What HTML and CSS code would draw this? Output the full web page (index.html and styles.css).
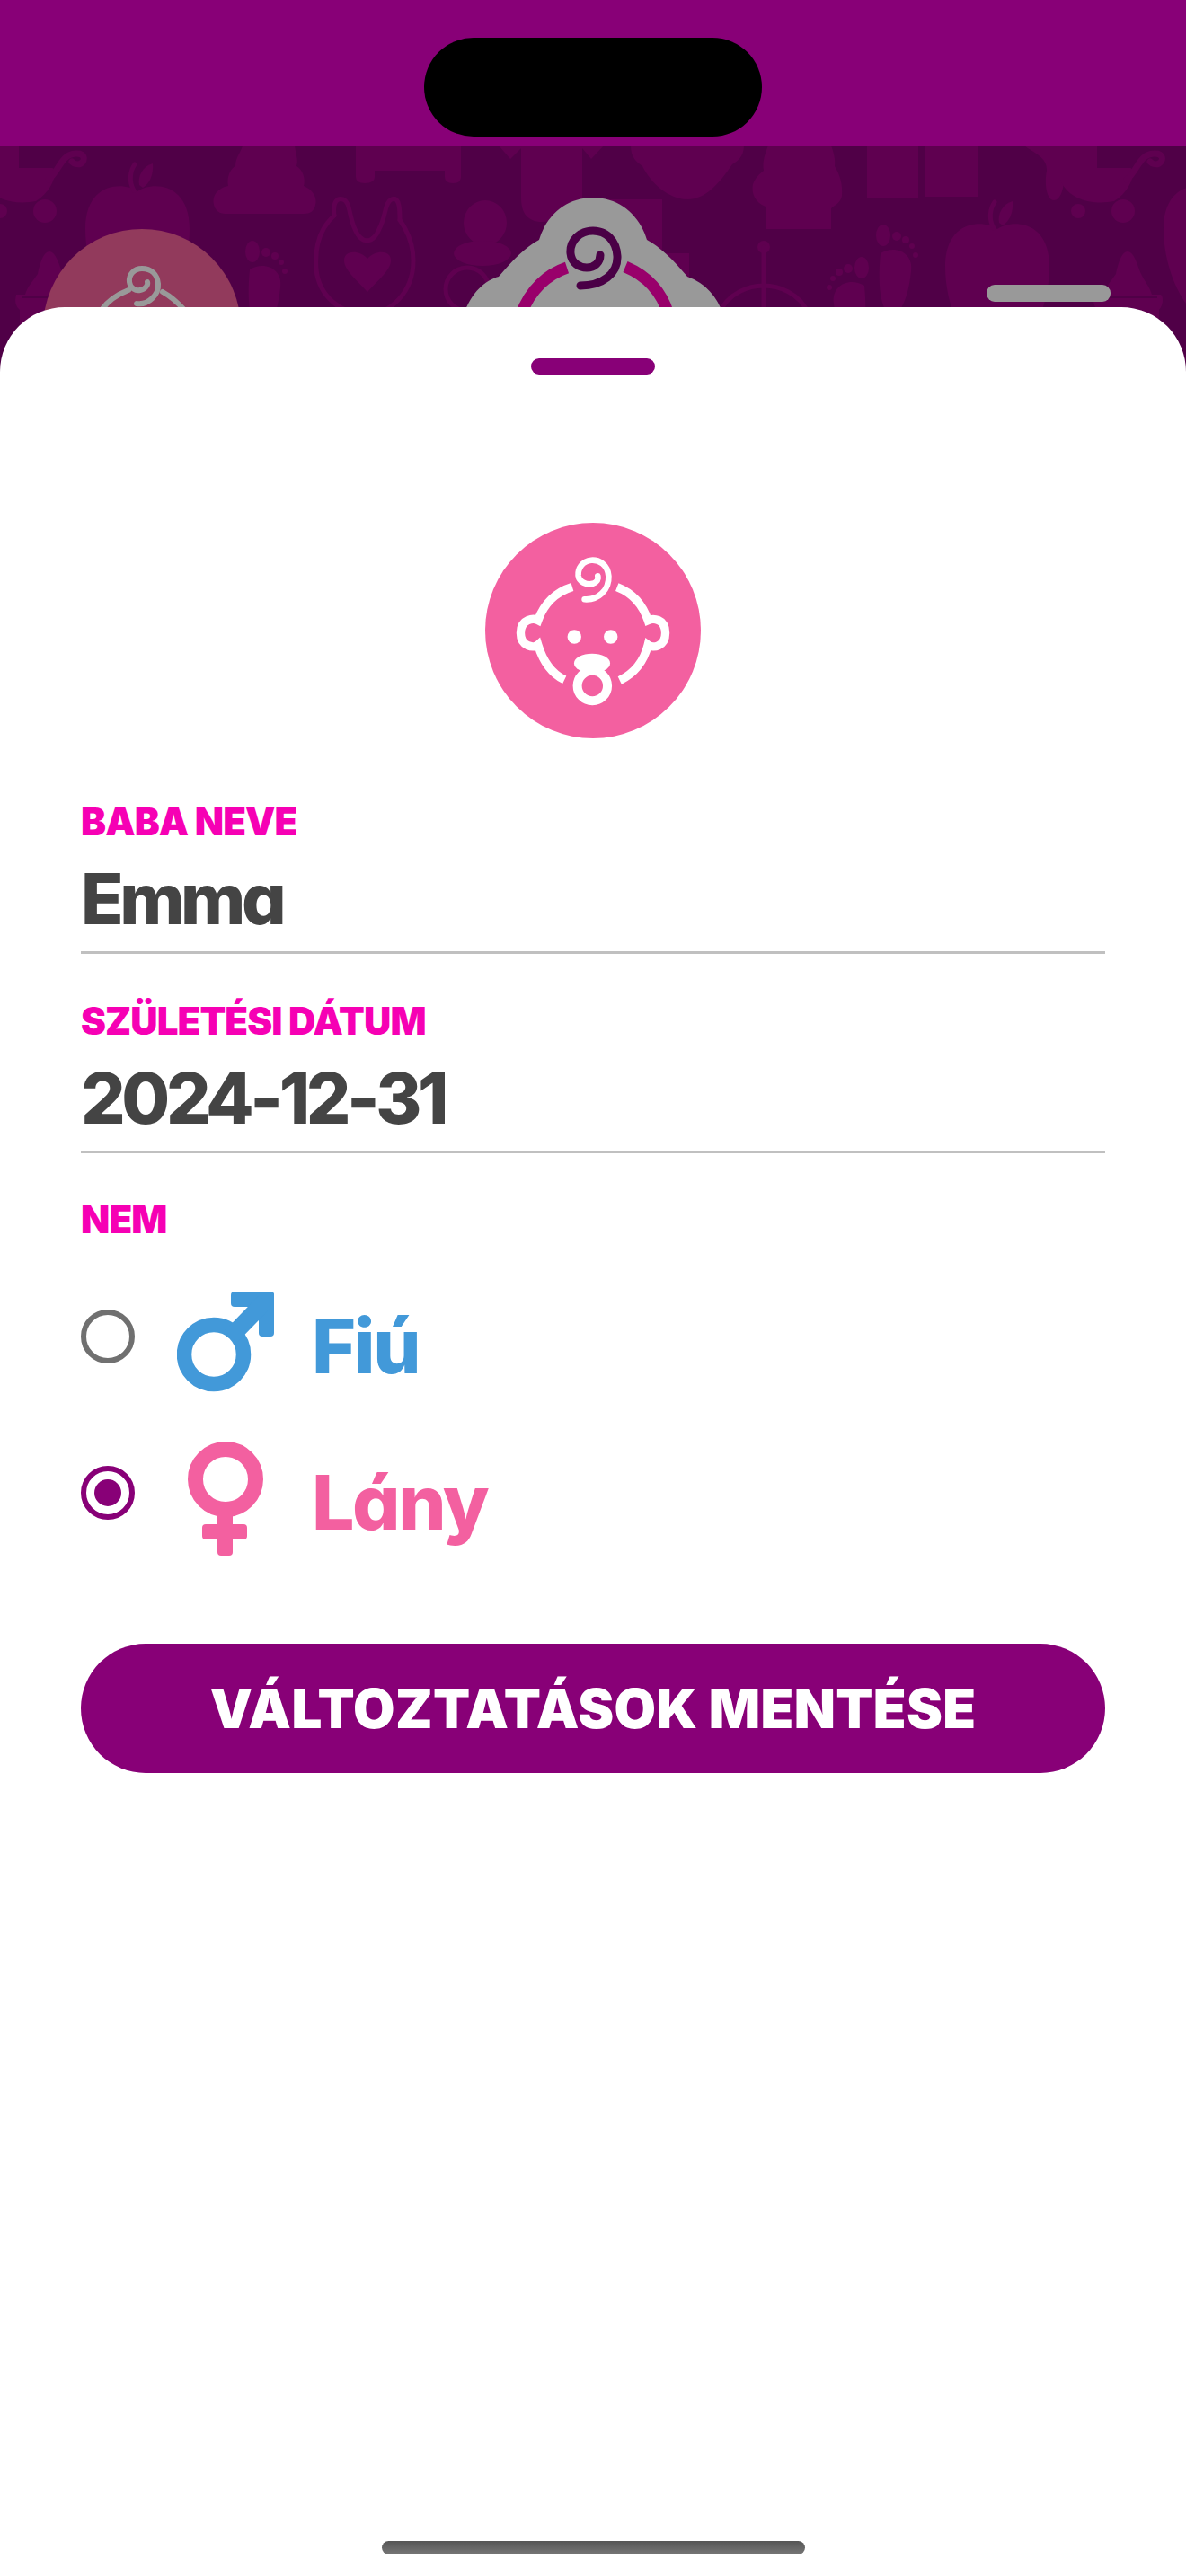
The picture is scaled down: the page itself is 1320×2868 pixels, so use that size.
FILE: index.html
```html
<!DOCTYPE html>
<html lang="hu">
<head>
<meta charset="utf-8">
<title>Baba adatai</title>
<link rel="stylesheet" href="styles.css">
</head>
<body>
<div class="screen">
  <header class="status"><div class="island"></div></header>
  <div class="hero">
    <svg class="hero-art" viewBox="0 162 1320 252" width="1320" height="252" aria-hidden="true">
      <defs>
        <g id="apple">
          <path class="sh" d="M0 3C-15-8-58-8-58 45C-58 95-30 150 0 150C30 150 58 95 58 45C58-8 15-8 0 3Z"/>
          <path class="ln4" d="M-4 2C-10-8-8-20-3-27"/>
          <path class="sh" d="M2-4C0-14 6-25 17-28C18-16 14-6 6-1Z"/>
        </g>
        <g id="foot">
          <ellipse class="sh" cx="0" cy="0" rx="8" ry="12"/>
          <circle class="sh" cx="15" cy="1" r="5"/>
          <circle class="sh" cx="25" cy="5" r="4"/>
          <circle class="sh" cx="32" cy="12" r="3"/>
          <circle class="sh" cx="36" cy="22" r="3"/>
          <path class="sh" d="M-3 20C14 10 34 20 31 40C29 60 24 80 13 90C-2 90-7 60-3 20Z"/>
        </g>
        <g id="tile">
          <path class="sh" d="M-20 162H21V187H58C65 188 60 212 40 224C20 228-10 225-20 200Z"/>
          <path class="ln6" d="M54 200C66 190 68 172 84 171C94 170 96 178 90 182C86 184 82 182 80 180"/>
          <circle class="sh" cx="50" cy="235" r="13"/>
          <circle class="sh" cx="0" cy="235" r="8"/>
          <use href="#apple" x="153" y="210"/>
          <use href="#apple" x="1110" y="252"/>
          <path class="sh" d="M270 162H328C330 175 332 178 330 185C338 190 340 200 338 207C350 212 353 222 351 228C350 235 345 238 338 238H250C240 238 236 228 238 220C240 212 248 208 254 207C252 198 256 188 262 185C262 175 268 170 270 162Z"/>
          <path class="ln4" d="M372 240C355 255 350 275 352 300C355 330 380 350 407 350C435 350 460 325 460 290C460 270 452 255 445 245"/>
          <path class="ln4" d="M372 240C370 225 375 220 382 222C390 225 388 240 395 255C402 272 415 272 422 255C430 240 428 225 436 222C445 218 445 235 445 245"/>
          <path class="sh" d="M409 325C395 310 383 300 383 290C383 278 400 278 409 288C418 278 435 278 435 290C435 300 423 310 409 325Z"/>
          <use href="#foot" x="281" y="280"/>
          <use href="#foot" x="983" y="262"/>
          <g transform="translate(972 298) scale(-1 1)"><use href="#foot" x="13" y="0"/></g>
          <path class="sh" d="M396 162H513V197Q513 204 504 204Q495 204 495 197V190H417V197Q417 204 406 204Q396 204 396 197Z"/>
          <path class="sh" d="M580 162H648V222C648 240 620 247 600 247C585 245 580 235 580 220ZM555 162L568 177L580 165V162ZM648 162V165L658 177L672 162Z"/>
          <ellipse class="sh" cx="540" cy="248" rx="24" ry="25"/>
          <ellipse class="sh" cx="537" cy="282" rx="32" ry="14"/>
          <circle class="ln4" cx="520" cy="322" r="24"/>
          <path class="sh" d="M702 162H828C828 175 820 180 815 183C800 205 785 222 765 222C745 222 725 205 715 185C708 180 702 175 702 162Z"/>
          <path class="sh" d="M650 222H737V282H767V350H650Z"/>
          <path class="sh" d="M855 162H925C928 170 930 178 929 185C935 195 938 205 937 218C936 225 930 228 925 232V255H852V230C840 225 836 215 838 205C842 195 848 192 850 190C848 180 852 170 855 162Z"/>
          <rect class="sh" x="965" y="162" width="57" height="59"/>
          <rect class="sh" x="1030" y="162" width="58" height="57"/>
          <path class="sh" d="M1140 162H1200C1190 170 1183 175 1184 195C1185 210 1180 223 1173 223C1165 223 1162 205 1165 190C1166 175 1150 170 1140 162Z"/>
          <path class="sh" d="M55 280C48 280 44 295 42 305C35 315 30 320 28 328H18Q15 340 22 345V400H90V345C95 340 95 330 92 328H82C80 320 75 315 70 305C66 295 62 280 55 280Z"/>
          <path class="gap" d="M24 331H88"/>
          <circle class="sh" cx="850" cy="275" r="7"/>
          <path class="ln4" d="M850 275V350M800 350C810 325 835 318 850 318C865 318 890 325 900 350"/>
        </g>
      </defs>
      <rect class="base" x="0" y="162" width="1320" height="252"/>
      <use href="#tile"/>
      <use href="#tile" x="1200"/>
      <circle class="dim-pink" cx="158" cy="365" r="110"/>
      <path class="dim-ln6" d="M152 338C165 340 177 328 176 316C175 305 168 299 158 299C149 299 143 306 144 314C145 321 151 324 156 323C162 322 165 317 164 314M143 323C130 328 120 335 113 345M181 325C190 330 198 337 205 345"/>
      <path class="dim-logo" d="M516 350C525 325 540 312 555 308C570 290 585 275 600 267C608 240 630 220 660 220C690 220 712 240 720 267C735 275 750 290 765 308C785 315 798 330 805 350Z"/>
      <path class="logo-arc" d="M631 298C610 305 590 322 580 350M696 297C715 305 735 320 744 350"/>
      <path class="logo-curl" d="M646 318C670 318 688 305 687 285C686 268 675 257 660 257C645 257 634 268 635 282C636 293 645 298 653 298C662 298 668 292 668 284"/>
    </svg>
    <div class="hero-tab"></div>
  </div>
  <main class="sheet">
    <div class="handle"></div>
    <div class="avatar">
      <svg class="avatar-icon" viewBox="122 67 718 718" width="240" height="240" aria-hidden="true">
        <path class="face" d="M412 281C360 297 318 335 298 392C285 385 240 385 240 434C240 480 285 486 298 474C315 530 345 570 386 590"/>
        <path class="face" d="M561 281C610 300 645 335 664 392C680 385 722 385 722 434C722 480 680 486 664 474C650 530 615 570 570 592"/>
        <path class="curl" d="M453 322C500 325 535 290 533 245C530 205 500 190 475 192C445 195 430 220 432 243C435 265 460 275 480 270C495 265 500 255 497 245"/>
        <circle class="dot" cx="419" cy="447" r="23"/>
        <circle class="dot" cx="540" cy="447" r="23"/>
        <ellipse class="dot" cx="478" cy="535" rx="60" ry="32"/>
        <circle class="paci" cx="479" cy="610" r="50"/>
      </svg>
    </div>
    <form class="form">
      <div class="field">
        <div class="label">BABA NEVE</div>
        <div class="value">Emma</div>
      </div>
      <div class="field">
        <div class="label">SZÜLETÉSI DÁTUM</div>
        <div class="value">2024-12-31</div>
      </div>
      <div class="label label-nem">NEM</div>
      <div class="option option-boy">
        <span class="radio"></span>
        <span class="sex-icon">
          <svg viewBox="0 0 108 112" width="108" height="112" aria-hidden="true">
            <circle class="boy-ln" cx="41" cy="70" r="33"/>
            <rect class="boy" x="60" y="0" width="48" height="17" rx="4"/>
            <rect class="boy" x="91" y="0" width="17" height="50" rx="4"/>
            <path class="boy-bar" d="M60 50L98 11"/>
          </svg>
        </span>
        <span class="opt-text boy-text">Fiú</span>
      </div>
      <div class="option option-girl">
        <span class="radio radio-on"><span class="radio-dot"></span></span>
        <span class="sex-icon">
          <svg viewBox="0 0 84 127" width="84" height="127" aria-hidden="true">
            <circle class="girl-ln" cx="42" cy="42" r="33.5"/>
            <rect class="girl" x="33" y="70" width="17" height="57" rx="4"/>
            <rect class="girl" x="16" y="92" width="50" height="17" rx="4"/>
          </svg>
        </span>
        <span class="opt-text girl-text">Lány</span>
      </div>
      <button class="save" type="button">VÁLTOZTATÁSOK MENTÉSE</button>
    </form>
    <div class="home-bar"></div>
  </main>
</div>
</body>
</html>
```
FILE: styles.css
```css
* { box-sizing: border-box; }
html, body { margin: 0; padding: 0; background: #fff; }
body { font-family: Inter, "Liberation Sans", sans-serif; font-feature-settings: "cv11" 1; }
.screen { width: 1320px; height: 2868px; display: flex; flex-direction: column; overflow: hidden; }

.status { height: 162px; background: #880077; padding-top: 42px; display: flex; justify-content: center; flex: none; }
.island { width: 376px; height: 110px; background: #000; border-radius: 55px; }

.hero { height: 252px; flex: none; position: relative; background: #500047; }
.hero-art { display: block; }
.base { fill: #500047; }
.sh { fill: #5f0050; }
.ln4, .ln6 { fill: none; stroke: #5f0050; stroke-linecap: round; }
.ln4 { stroke-width: 5; }
.ln6 { stroke-width: 7; }
.gap { fill: none; stroke: #500047; stroke-width: 2; }
.dim-pink { fill: #923a5c; }
.dim-ln6 { fill: none; stroke: #999; stroke-width: 6; stroke-linecap: round; }
.dim-logo { fill: #999; }
.logo-arc { fill: none; stroke: #99006b; stroke-width: 13; }
.logo-curl { fill: none; stroke: #4a0046; stroke-width: 9; stroke-linecap: round; }
.hero-tab { position: absolute; left: 1098px; top: 155px; width: 138px; height: 19px; border-radius: 9px; background: #999; }

.sheet { flex: 1; margin-top: -72px; position: relative; background: #fff; border-radius: 72px 72px 0 0; padding-top: 57px; display: flex; flex-direction: column; align-items: center; }
.handle { width: 138px; height: 18px; border-radius: 9px; background: #880077; flex: none; }
.avatar { width: 240px; height: 240px; border-radius: 50%; background: #f360a0; margin-top: 165px; flex: none; }
.avatar-icon { display: block; }
.face { fill: none; stroke: #fff; stroke-width: 28; }
.curl { fill: none; stroke: #fff; stroke-width: 20; stroke-linecap: round; }
.dot { fill: #fff; }
.paci { fill: none; stroke: #fff; stroke-width: 30; }

.form { width: 1140px; margin-top: 73px; display: flex; flex-direction: column; flex: none; }
.field { border-bottom: 3px solid #c0c0c0; padding-bottom: 18px; margin-bottom: 55px; }
.field + .field { margin-bottom: 54px; }
.label { font-size: 42px; line-height: 40px; font-weight: 900; color: #f600b4; letter-spacing: -0.9px; }
.value { font-size: 78px; line-height: 80px; font-weight: 850; color: #444; margin-top: 26px; letter-spacing: -4.4px; }

.option { display: flex; align-items: flex-start; }
.option-boy { margin-top: 60px; }
.option-girl { margin-top: 55px; }
.radio { width: 60px; height: 60px; border-radius: 50%; border: 6px solid #707070; flex: none; display: flex; align-items: center; justify-content: center; }
.option-boy .radio { margin-top: 20px; }
.option-girl .radio { margin-top: 27px; }
.radio-on { border-color: #880077; }
.radio-dot { width: 30px; height: 30px; border-radius: 50%; background: #880077; }
.sex-icon { width: 108px; margin-left: 47px; flex: none; display: flex; justify-content: center; }
.sex-icon svg { display: block; }
.boy { fill: #4299d9; }
.boy-ln { fill: none; stroke: #4299d9; stroke-width: 16.5; }
.boy-bar { fill: none; stroke: #4299d9; stroke-width: 19; }
.girl { fill: #f360a0; }
.girl-ln { fill: none; stroke: #f360a0; stroke-width: 17; }
.opt-text { font-size: 84px; line-height: 90px; font-weight: 850; margin-left: 42px; letter-spacing: -2.4px; }
.boy-text { color: #4299d9; margin-top: 16px; }
.girl-text { color: #f360a0; margin-top: 23px; }

.save { margin-top: 98px; height: 144px; width: 100%; border: 0; border-radius: 72px; background: #880077; color: #fff; font-family: inherit; font-feature-settings: inherit; font-size: 60px; font-weight: 900; letter-spacing: 0.4px; padding: 0; }

.home-bar { width: 471px; height: 15px; border-radius: 8px; background: linear-gradient(#555, #777); margin-top: auto; margin-bottom: 24px; flex: none; }
```
